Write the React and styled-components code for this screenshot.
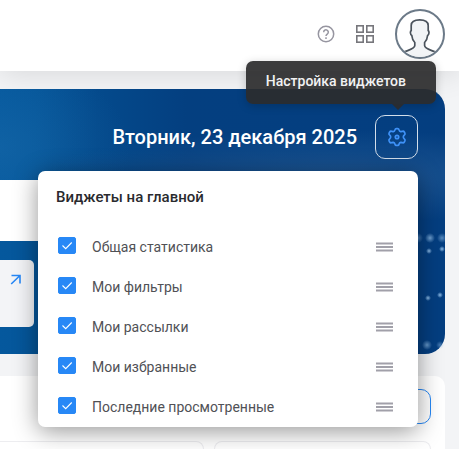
import React, {useState} from 'react';
import styled, {createGlobalStyle} from 'styled-components';

const GlobalStyle = createGlobalStyle`
  * {
    box-sizing: border-box;
  }

  body {
    margin: 0;
    background: #f3f4f6;
    font-family: Roboto, 'Noto Sans', sans-serif;
  }

  button {
    font: inherit;
    padding: 0;
    cursor: pointer;
  }
`;

const Page = styled.div`
  display: flex;
  flex-direction: column;
  height: 100vh;
  overflow: hidden;
`;

const Header = styled.header`
  display: flex;
  flex: none;
  align-items: center;
  justify-content: flex-end;
  gap: 21px;
  height: 71px;
  padding: 0 14px 3px 0;
  background: white;
  box-shadow: 0 2px 30px rgba(0, 0, 0, 0.12);
`;

const IconButton = styled.button`
  display: flex;
  border: none;
  background: none;
  color: ${props => props.$color};
`;

const Avatar = styled.button`
  width: 50px;
  height: 50px;
  border: 2px solid #6c7a88;
  border-radius: 50%;
  background: white;
  overflow: hidden;
`;

const Main = styled.main`
  display: flex;
  flex: 1;
  flex-direction: column;
  gap: 22px;
  min-height: 0;
  padding: 18px 14px 0 0;
`;

const Hero = styled.section`
  display: flex;
  flex: none;
  flex-direction: column;
  position: relative;
  z-index: 1;
  height: 265px;
  border-radius: 0 20px 20px 0;
  background:
    radial-gradient(ellipse 300px 46px at 76% 33%, rgba(58, 112, 168, 0.45), transparent),
    radial-gradient(ellipse 130px 90px at 0% 22%, rgba(40, 120, 180, 0.3), transparent),
    linear-gradient(90deg, #05589d 0%, #05569a 8%, #044a8c 22%, #043f80 42%, #043e80 100%);
`;

const Sparks = styled.svg`
  position: absolute;
  right: 0;
  top: 0;
`;

const HeroTop = styled.div`
  display: flex;
  align-items: center;
  justify-content: flex-end;
  gap: 18px;
  padding: 26px 27px 21px 0;
`;

const DateTitle = styled.h1`
  margin: 0;
  color: white;
  font-size: 20px;
  font-weight: 500;
  line-height: 24px;
`;

const Settings = styled.div`
  position: relative;
`;

const SettingsButton = styled.button`
  display: flex;
  align-items: center;
  justify-content: center;
  width: 43px;
  height: 44px;
  border: 1px solid #d3deea;
  border-radius: 10px;
  background: none;
  color: #3f92f8;
`;

const Tooltip = styled.div`
  position: absolute;
  right: -18px;
  bottom: 55px;
  padding: 10px 30px 13px 20px;
  border-radius: 7px;
  background: rgba(43, 43, 45, 0.92);
  box-shadow: 0 2px 10px rgba(0, 0, 0, 0.2);
  color: #f1f1f2;
  font-size: 14px;
  font-weight: 500;
  line-height: 20px;
  white-space: nowrap;

  &::after {
    content: '';
    position: absolute;
    top: 100%;
    right: 32px;
    border: 6px solid transparent;
    border-top-color: rgba(43, 43, 45, 0.92);
    border-bottom: none;
  }
`;

const Menu = styled.div`
  position: absolute;
  top: 56px;
  right: 0;
  width: 380px;
  padding: 16px 25px 0 18px;
  border-radius: 7px;
  background: white;
  box-shadow: 0 4px 24px rgba(0, 0, 0, 0.42);
`;

const MenuTitle = styled.h2`
  margin: 0 0 20px;
  color: #292a2e;
  font-size: 15px;
  font-weight: 500;
  line-height: 20px;
`;

const WidgetList = styled.ul`
  margin: 0;
  padding: 0 0 0 2px;
  list-style: none;
`;

const WidgetRow = styled.li`
  display: flex;
  align-items: center;
  justify-content: space-between;
  height: 40px;
`;

const WidgetLabel = styled.label`
  display: flex;
  align-items: center;
  gap: 16px;
  color: #505156;
  font-size: 14px;
  line-height: 20px;
`;

const CheckBox = styled.span`
  display: grid;
  margin-bottom: 3px;

  > * {
    grid-area: 1 / 1;
  }
`;

const CheckInput = styled.input`
  appearance: none;
  width: 18px;
  height: 17px;
  margin: 0;
  border: 1px solid #2788f6;
  border-radius: 2px;
  background: white;

  &:checked {
    background: #2788f6;
  }
`;

const DragHandle = styled.button`
  display: flex;
  border: none;
  background: none;
`;

const SearchBar = styled.div`
  flex: none;
  height: 61px;
  margin-right: 60px;
  background: white;
`;

const StatCard = styled.div`
  width: 34px;
  height: 67px;
  margin-top: 19px;
  padding: 14px 13px 0 0;
  border-radius: 0 5px 5px 0;
  background: #f3f4f7;
`;

const StatLink = styled.a`
  display: flex;
  justify-content: flex-end;
  color: #2788f6;
`;

const Panel = styled.section`
  display: flex;
  flex: 1;
  flex-direction: column;
  gap: 17px;
  min-height: 0;
  padding: 13px 14px 0 0;
  border-radius: 0 10px 0 0;
  background: white;
`;

const PanelButton = styled.button`
  flex: none;
  align-self: flex-end;
  width: 120px;
  height: 35px;
  border: 1px solid #2788f6;
  border-radius: 10px;
  background: white;
`;

const Cards = styled.div`
  display: grid;
  flex: 1;
  grid-template-columns: 204px 1fr;
  gap: 10px;
`;

const Card = styled.div`
  border: 1px solid #ededf0;
  border-bottom: none;
  border-left-width: ${props => (props.$first ? 0 : '1px')};
  border-radius: ${props => (props.$first ? '0 10px 0 0' : '10px 10px 0 0')};
`;

const widgets = [
  {id: 'stats', name: 'Общая статистика'},
  {id: 'filters', name: 'Мои фильтры'},
  {id: 'mailings', name: 'Мои рассылки'},
  {id: 'favorites', name: 'Мои избранные'},
  {id: 'recent', name: 'Последние просмотренные'},
];

// x, y, radius, opacity
const sparks = [
  [63, 149, 5, 0.5],
  [75, 149, 5, 0.8],
  [87, 149, 5, 0.6],
  [74, 162, 3, 1],
  [87, 160, 3, 1],
  [73, 209, 3, 1],
  [85, 206, 3, 1],
  [72, 256, 5, 0.7],
  [85, 256, 4, 0.5],
];

const HelpIcon = () => (
  <svg width="18" height="18" viewBox="0 0 18 18" fill="none" stroke="currentColor" strokeWidth="1.5">
    <circle cx="9" cy="9" r="7.7" />
    <path d="M6.7 7.2a2.3 2.3 0 1 1 3.7 1.8C9.5 9.7 9 10 9 11" />
    <path d="M9 12.3v1.6" />
  </svg>
);

const AppsIcon = () => (
  <svg width="18" height="18" viewBox="0 0 18 18" fill="none" stroke="currentColor" strokeWidth="1.6">
    <rect x="0.8" y="0.8" width="6.4" height="6.4" />
    <rect x="10.8" y="0.8" width="6.4" height="6.4" />
    <rect x="0.8" y="10.8" width="6.4" height="6.4" />
    <rect x="10.8" y="10.8" width="6.4" height="6.4" />
  </svg>
);

const PersonIcon = () => (
  <svg width="46" height="46" viewBox="0 0 46 46" fill="#f2f4f6" stroke="#4b535c" strokeWidth="1.7">
    <path d="M3 43.500C8 39.500 17.800 38.500 17.800 34.500V31.500C15.800 29.500 15 27 14.800 24.500C13.200 23.500 13 20.500 14.200 19.500V14.500C14.200 10.500 17 8.800 22.700 8.800S31.200 10.500 31.200 14.500V19.500C32.400 20.500 32.200 23.500 30.600 24.500C30.400 27 29.600 29.500 27.600 31.500V34.500C27.600 38.500 37.500 39.500 42.500 43.500V50H3Z" />
  </svg>
);

const GearIcon = () => (
  <svg width="20" height="20" viewBox="-10 -10 20 20" fill="none" stroke="currentColor" strokeWidth="1.7" strokeLinejoin="round">
    <path d="M-2 -7.200Q-1.700 -8.400 -.6 -8.400H.6Q1.700 -8.400 2 -7.200Q2.500 -5.600 3.700 -5.300L5.400 -5.700Q6.700 -6 7.300 -5L7.900 -3.900Q8.400 -2.900 7.500 -2.100Q6.300 -1 6.300 0T7.500 2.100Q8.400 2.900 7.900 3.900L7.300 5Q6.700 6 5.400 5.700L3.700 5.300Q2.500 5.600 2 7.200Q1.700 8.400 .6 8.400H-.6Q-1.700 8.400 -2 7.200Q-2.500 5.600 -3.700 5.300L-5.400 5.700Q-6.700 6 -7.300 5L-7.900 3.900Q-8.400 2.900 -7.500 2.100Q-6.300 1 -6.300 0T-7.500 -2.100Q-8.400 -2.900 -7.900 -3.900L-7.300 -5Q-6.700 -6 -5.400 -5.700L-3.700 -5.300Q-2.500 -5.600 -2 -7.200Z" />
    <circle r="1.7" />
  </svg>
);

const CheckIcon = () => (
  <svg width="18" height="17" viewBox="0 0 18 17" fill="none" stroke="white" strokeWidth="1.1" pointerEvents="none">
    <path d="M4.500 8.500l3.200 3.200 6-6.200" />
  </svg>
);

const HandleIcon = () => (
  <svg width="18" height="10" viewBox="0 0 18 10" fill="#a1a0a9">
    <rect x="1" y="0.5" width="17" height="2" />
    <rect x="1" y="4" width="17" height="2" />
    <rect x="1" y="7.5" width="17" height="2" />
  </svg>
);

const ArrowIcon = () => (
  <svg width="11" height="11" viewBox="0 0 11 11" fill="none" stroke="currentColor" strokeWidth="1.6">
    <path d="M1.5 1.500H10V9.500M10 1.500L1.200 10" />
  </svg>
);

function WidgetItem({widget, checked, onToggle}) {
  return (
    <WidgetRow>
      <WidgetLabel htmlFor={widget.id}>
        <CheckBox>
          <CheckInput type="checkbox" id={widget.id} checked={checked} onChange={onToggle} />
          {checked && <CheckIcon />}
        </CheckBox>
        {widget.name}
      </WidgetLabel>
      <DragHandle type="button" aria-label="Переместить">
        <HandleIcon />
      </DragHandle>
    </WidgetRow>
  );
}

function App() {
  const [hidden, setHidden] = useState([]);

  const toggle = id => {
    setHidden(hidden.includes(id) ? hidden.filter(item => item !== id) : [...hidden, id]);
  };

  return (
    <Page>
      <GlobalStyle />
      <Header>
        <IconButton type="button" aria-label="Помощь" $color="#9695a0">
          <HelpIcon />
        </IconButton>
        <IconButton type="button" aria-label="Приложения" $color="#77777c">
          <AppsIcon />
        </IconButton>
        <Avatar type="button" aria-label="Профиль">
          <PersonIcon />
        </Avatar>
      </Header>
      <Main>
        <Hero>
          <Sparks width="90" height="265" viewBox="0 0 90 265">
            <defs>
              <radialGradient id="spark">
                <stop offset="0" stopColor="#8dbbe6" />
                <stop offset="1" stopColor="#8dbbe6" stopOpacity="0" />
              </radialGradient>
            </defs>
            {sparks.map(([x, y, r, opacity]) => (
              <circle key={`${x}-${y}`} cx={x} cy={y} r={r} opacity={opacity} fill="url(#spark)" />
            ))}
          </Sparks>
          <HeroTop>
            <DateTitle>Вторник, 23 декабря 2025</DateTitle>
            <Settings>
              <SettingsButton type="button" aria-label="Настройка виджетов">
                <GearIcon />
              </SettingsButton>
              <Tooltip role="tooltip">Настройка виджетов</Tooltip>
              <Menu>
                <MenuTitle>Виджеты на главной</MenuTitle>
                <WidgetList>
                  {widgets.map(widget => (
                    <WidgetItem
                      key={widget.id}
                      widget={widget}
                      checked={!hidden.includes(widget.id)}
                      onToggle={() => toggle(widget.id)}
                    />
                  ))}
                </WidgetList>
              </Menu>
            </Settings>
          </HeroTop>
          <SearchBar />
          <StatCard>
            <StatLink href="#stats" aria-label="Открыть">
              <ArrowIcon />
            </StatLink>
          </StatCard>
        </Hero>
        <Panel>
          <PanelButton type="button" aria-label="Все" />
          <Cards>
            <Card $first />
            <Card />
          </Cards>
        </Panel>
      </Main>
    </Page>
  );
}

export default App;
